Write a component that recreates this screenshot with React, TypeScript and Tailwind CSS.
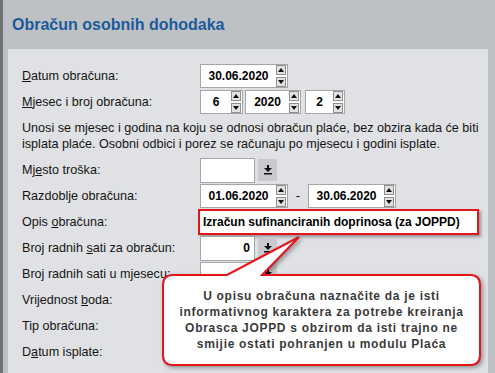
import React from 'react';

const Spinner: React.FC = () => (
  <div className="flex flex-col gap-[2px] pr-[1px]">
    <div className="w-[10px] h-[10px] bg-[#e2e2e2] border border-[#8e8e8e] flex items-center justify-center">
      <svg width="6" height="4" viewBox="0 0 6 4">
        <path d="M3 0L6 4H0Z" fill="#111" />
      </svg>
    </div>
    <div className="w-[10px] h-[10px] bg-[#e2e2e2] border border-[#8e8e8e] flex items-center justify-center">
      <svg width="6" height="4" viewBox="0 0 6 4">
        <path d="M0 0H6L3 4Z" fill="#111" />
      </svg>
    </div>
  </div>
);

const NumBox: React.FC<{ value: string; width: string }> = ({ value, width }) => (
  <div className="flex items-center h-[24px] border border-[#a6a6a6] bg-white">
    <div className={`${width} text-center text-[12px] font-bold text-black`}>{value}</div>
    <Spinner />
  </div>
);

const DropBtn: React.FC = () => (
  <div className="ml-[3px] w-[19px] h-[22px] bg-[#c9cacd] flex items-center justify-center">
    <svg width="8" height="10" viewBox="0 0 8 10">
      <rect x="3" y="0" width="2" height="3" fill="#111" />
      <path d="M0 3H8L4 7Z" fill="#111" />
      <rect x="0" y="8" width="8" height="1.5" fill="#111" />
    </svg>
  </div>
);

const Label: React.FC<{ children: React.ReactNode }> = ({ children }) => (
  <div className="w-[178px] shrink-0 whitespace-nowrap text-[12.6px] text-[#141414]">{children}</div>
);

const Row: React.FC<{ children: React.ReactNode }> = ({ children }) => (
  <div className="flex items-center h-[26px]">{children}</div>
);

export default function App() {
  return (
    <div
      className="relative w-[495px] h-[373px] overflow-hidden bg-[#bec1c4] border-l-[3px] border-[#6e7174]"
      style={{ fontFamily: '"Liberation Sans", Arial, sans-serif' }}
    >
      <div className="h-[49px] flex items-center pl-[9px] text-[16px] font-bold text-[#1b5a9b]">
        Obračun osobnih dohodaka
      </div>

      <div className="ml-[5px] w-[480px] h-[324px] bg-[#e0e1e4] pt-[14px] pl-[14px]">
        <Row>
          <Label><u>D</u>atum obračuna:</Label>
          <NumBox value="30.06.2020" width="w-[75px]" />
        </Row>
        <Row>
          <Label><u>M</u>jesec i broj obračuna:</Label>
          <div className="flex items-center">
            <NumBox value="6" width="w-[30px]" />
            <div className="ml-[2px]">
              <NumBox value="2020" width="w-[43px]" />
            </div>
            <div className="ml-[4px]">
              <NumBox value="2" width="w-[27px]" />
            </div>
          </div>
        </Row>

        <p className="mt-[5px] whitespace-nowrap text-[12.6px] leading-[16px] text-[#141414]">
          Unosi se mjesec i godina na koju se odnosi obračun plaće, bez obzira kada će biti
          <br />
          isplata plaće. Osobni odbici i porez se računaju po mjesecu i godini isplate.
        </p>

        <div className="mt-[5px]">
          <Row>
            <Label>Mj<u>e</u>sto troška:</Label>
            <div className="w-[55px] h-[25px] border border-[#a6a6a6] bg-white" />
            <DropBtn />
          </Row>
          <Row>
            <Label>Razdoblje obračuna:</Label>
            <NumBox value="01.06.2020" width="w-[75px]" />
            <div className="w-[20px] text-center text-[13px] text-[#141414]">-</div>
            <NumBox value="30.06.2020" width="w-[75px]" />
          </Row>
          <Row>
            <Label>Opis <u>o</u>bračuna:</Label>
            <div className="-ml-[2px] w-[281px] h-[26px] border-2 border-[#e3151b] bg-white shadow-[2px_2px_3px_rgba(0,0,0,0.35)] flex items-center pl-[3px] text-[12px] font-bold text-black">
              Izračun sufinanciranih doprinosa (za JOPPD)
            </div>
          </Row>
          <Row>
            <Label>Broj radnih <u>s</u>ati za obračun:</Label>
            <div className="w-[55px] h-[25px] border border-[#a6a6a6] bg-white flex items-center justify-end pr-[4px] text-[12px] font-bold text-black">
              0
            </div>
            <DropBtn />
          </Row>
          <Row>
            <Label>Broj radnih sati u mjesecu:</Label>
            <div className="w-[55px] h-[25px] border border-[#a6a6a6] bg-white" />
            <DropBtn />
          </Row>
          <Row>
            <Label>Vrijednost <u>b</u>oda:</Label>
          </Row>
          <Row>
            <Label>Tip obračuna:</Label>
          </Row>
          <Row>
            <Label>D<u>a</u>tum isplate:</Label>
          </Row>
        </div>
      </div>

      {/* callout */}
      <svg
        className="absolute left-[147px] top-[230px] drop-shadow-[2px_2px_2px_rgba(0,0,0,0.35)]"
        width="340"
        height="143"
        viewBox="150 230 340 143"
      >
        <path
          d="M173 275 L227 275 L299 237 L262 275 L470 275 Q480 275 480 285 L480 355 Q480 365 470 365 L173 365 Q163 365 163 355 L163 285 Q163 275 173 275 Z"
          fill="#fff"
          stroke="#e3151b"
          strokeWidth="2"
          strokeLinejoin="miter"
        />
      </svg>
      <div className="absolute left-[160px] top-[275px] w-[317px] h-[90px] flex items-center justify-center text-center text-[12px] leading-[16px] font-bold tracking-[0.7px] text-[#3a3a3a]">
        <div>
          U opisu obračuna naznačite da je isti
          <br />
          informativnog karaktera za potrebe kreiranja
          <br />
          Obrasca JOPPD s obzirom da isti trajno ne
          <br />
          smijie ostati pohranjen u modulu Plaća
        </div>
      </div>
    </div>
  );
}
